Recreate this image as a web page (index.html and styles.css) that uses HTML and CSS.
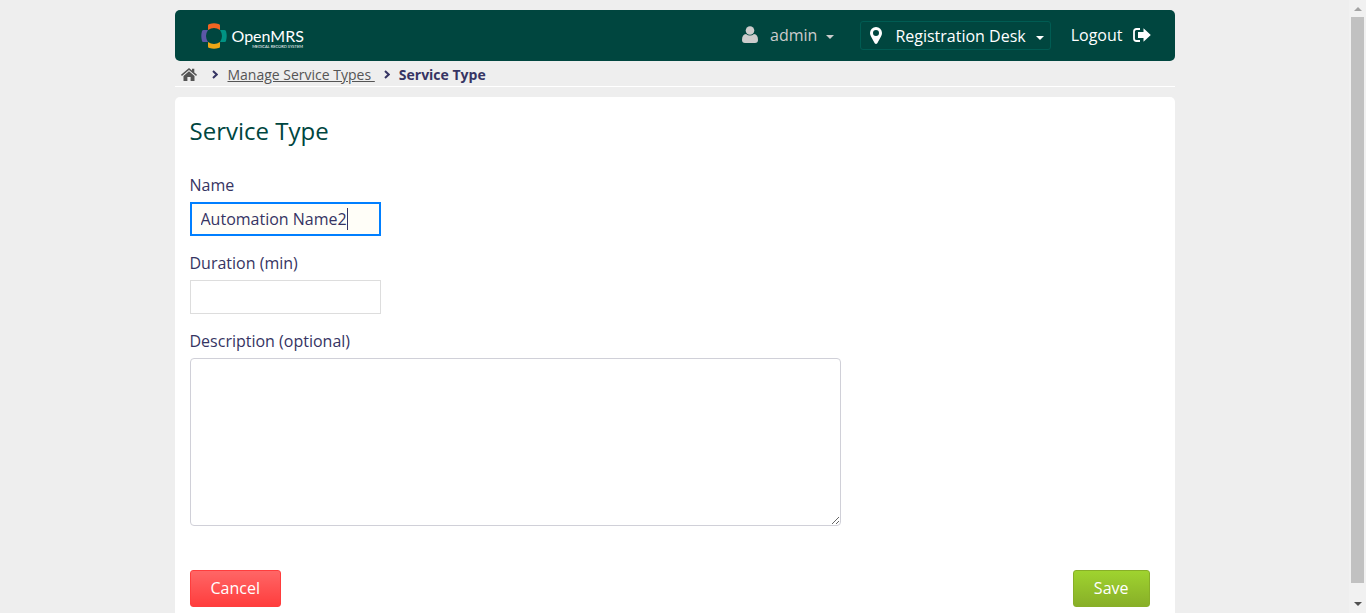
FILE: index.html
```html
<!DOCTYPE html>
<html lang="en">
<head>
<meta charset="utf-8">
<meta name="viewport" content="width=device-width, initial-scale=1">
<title>Service Type</title>
<link rel="stylesheet" href="styles.css">
</head>
<body>
<div class="page">
  <header class="topbar">
    <a class="brand" href="#">
      <svg class="brand-mark" viewBox="0 0 26 26" aria-hidden="true">
        <path fill="#f26522" d="M7 2.500Q7 1 8.500.9Q13-.3 17.500.9Q19 1 19 2.500V7Q13 3 7 7Z"/>
        <path fill="#009384" d="M23.500 7Q25 7 25.100 8.500Q26.300 13 25.100 17.500Q25 19 23.500 19H19Q23 13 19 7Z"/>
        <path fill="#eea616" d="M7 23.500Q7 25 8.500 25.100Q13 26.300 17.500 25.100Q19 25 19 23.500V19Q13 23 7 19Z"/>
        <path fill="#5b57a6" d="M2.500 7Q1 7 .9 8.500Q-.3 13 .9 17.500Q1 19 2.500 19H7Q3 13 7 7Z"/>
      </svg>
      <span class="brand-text">
        <span class="brand-name">OpenMRS</span>
        <span class="brand-tag">MEDICAL RECORD SYSTEM</span>
      </span>
    </a>
    <nav class="user-nav">
      <a class="nav-user" href="#">
        <svg class="icon-user" viewBox="0 0 16 17" aria-hidden="true"><circle cx="8" cy="4.500" r="4.300"/><path d="M4 8Q8 11 12 8Q16 8.500 16 14Q16 17 13 17H3Q0 17 0 14Q0 8.500 4 8Z"/></svg>
        <span>admin</span>
        <span class="caret"></span>
      </a>
      <button class="nav-location" type="button">
        <svg class="icon-pin" viewBox="0 0 12 17" aria-hidden="true"><path fill-rule="evenodd" d="M6 0A6 6 0 0 1 12 6Q12 7.500 11 9.500L7.300 16.200Q6 17.700 4.700 16.200L1 9.500Q0 7.500 0 6A6 6 0 0 1 6 0ZM6 3A3 3 0 0 0 6 9A3 3 0 0 0 6 3Z"/></svg>
        <span>Registration Desk</span>
        <span class="caret"></span>
      </button>
      <a class="nav-logout" href="#">
        <span>Logout</span>
        <svg class="icon-logout" viewBox="0 0 18 14" aria-hidden="true"><path d="M7 1H3.500Q1 1 1 3.500V10.500Q1 13 3.500 13H7" fill="none" stroke="currentColor" stroke-width="1.800"/><path d="M5 4H10.500V.3L17.800 7L10.500 13.700V10H5Z"/></svg>
      </a>
    </nav>
  </header>

  <nav class="breadcrumbs" aria-label="Breadcrumb">
    <a class="crumb-home" href="#" aria-label="Home">
      <svg class="icon-home" viewBox="0 0 16 13" aria-hidden="true"><path d="M8 0L11 2.500V.8H13.300V4.500L16 6.800L15.100 7.900L8 2L.9 7.900L0 6.800Z"/><path d="M8 3.300L13.500 7.900V13H9.600V9H6.400V13H2.500V7.900Z"/></svg>
    </a>
    <svg class="icon-chevron" viewBox="0 0 6 9" aria-hidden="true"><path d="M1 1L4.700 4.500L1 8"/></svg>
    <a class="crumb-link" href="#">Manage Service Types&nbsp;</a>
    <svg class="icon-chevron" viewBox="0 0 6 9" aria-hidden="true"><path d="M1 1L4.700 4.500L1 8"/></svg>
    <span class="crumb-current">Service Type</span>
  </nav>

  <main class="card">
    <h1 class="title">Service Type</h1>
    <form class="form">
      <div class="field">
        <label for="name">Name</label>
        <div class="input-wrap">
          <input class="input input-active" id="name" type="text" value="Automation Name2">
          <span class="text-cursor"></span>
        </div>
      </div>
      <div class="field">
        <label for="duration">Duration (min)</label>
        <input class="input" id="duration" type="text">
      </div>
      <div class="field">
        <label for="description">Description (optional)</label>
        <textarea class="textarea" id="description"></textarea>
      </div>
      <div class="actions">
        <button class="btn btn-cancel" type="button">Cancel</button>
        <button class="btn btn-save" type="button">Save</button>
      </div>
    </form>
  </main>
</div>
<div class="scrollbar" aria-hidden="true">
  <span class="scroll-up"></span>
  <span class="scroll-thumb"></span>
  <span class="scroll-down"></span>
</div>
</body>
</html>
```
FILE: styles.css
```css
* { box-sizing: border-box; }

body {
  margin: 0;
  min-height: 100vh;
  display: flex;
  background: #eee;
  color: #363463;
  font-family: "Open Sans", sans-serif;
  font-size: 16px;
  line-height: 22px;
}

button, input, textarea { font: inherit; color: inherit; }
a { color: inherit; text-decoration: none; }
svg { display: block; flex: none; fill: currentColor; }

.page {
  flex: 1;
  max-width: 1000px;
  margin: 0 auto;
  padding-top: 10px;
  display: flex;
  flex-direction: column;
}

.topbar {
  display: flex;
  align-items: center;
  justify-content: space-between;
  height: 51px;
  padding: 0 24px 0 26px;
  background: #00463f;
  border-radius: 5px;
  color: #fff;
}

.brand { display: flex; align-items: center; gap: 5px; }
.brand-mark { width: 26px; height: 26px; }
.brand-text { display: flex; flex-direction: column; align-items: flex-end; padding-top: 4px; }
.brand-name { font-family: Lato, sans-serif; font-size: 16px; line-height: 18px; }
.brand-tag { font-family: Lato, sans-serif; font-size: 4px; line-height: 4px; padding-right: 1px; }

.user-nav { display: flex; align-items: center; padding-bottom: 2px; }
.nav-user { display: flex; align-items: center; gap: 12px; margin-right: 26px; color: #ccc; }
.nav-user .caret, .nav-location .caret { margin: 5px 0 0 -3px; }
.icon-user { width: 16px; height: 17px; }
.caret { border: 4px solid transparent; border-top-color: currentColor; border-bottom: 0; }

.nav-location {
  display: flex;
  align-items: center;
  gap: 13px;
  height: 29px;
  margin: 2px 20px 0 0;
  padding: 0 6px 0 9px;
  background: none;
  border: 1px solid #005c53;
  border-radius: 3px;
  color: #fff;
}
.icon-pin { width: 12px; height: 17px; }

.nav-logout { display: flex; align-items: center; gap: 10px; }
.icon-logout { width: 18px; height: 14px; }

.breadcrumbs {
  display: flex;
  align-items: center;
  height: 26px;
  padding: 2px 6px 0;
  border-bottom: 1px solid #fff;
  font-size: 14px;
  line-height: 20px;
}
.crumb-home { color: #555; margin-right: 15px; }
.icon-home { width: 16px; height: 13px; }
.icon-chevron { width: 6px; height: 9px; fill: none; stroke: currentColor; stroke-width: 2; }
.crumb-link { margin: 0 9px 0 10px; color: #555; text-decoration: underline; }
.crumb-current { margin-left: 9px; font-weight: 700; }

.card {
  flex: 1;
  margin-top: 10px;
  padding: 19px 25px 6px 15px;
  background: #fff;
  border-radius: 5px 5px 0 0;
}

.title { margin: 0 0 28px; color: #00463f; font-size: 24px; line-height: 30px; font-weight: 400; }

.form, .field { display: flex; flex-direction: column; }
.form { gap: 16px; }
.field { align-items: flex-start; gap: 6px; }

.input-wrap { position: relative; }
.input {
  display: block;
  width: 191px;
  height: 34px;
  padding: 0 10px;
  background: #fff;
  border: 1px solid #ddd;
  outline: 0;
}
.input-active { padding: 0 9px; background: #fffef8; border: 2px solid #007fff; }
.text-cursor { position: absolute; left: 157px; top: 6px; width: 1px; height: 22px; background: #363463; }

.textarea {
  display: block;
  width: 651px;
  max-width: 100%;
  height: 168px;
  padding: 5px 10px;
  background: #fff;
  border: 1px solid #d0d0d8;
  border-radius: 4px;
}

.actions { display: flex; justify-content: space-between; padding-top: 28px; }
.btn { height: 37px; padding: 0 20px 2px; border: 1px solid; border-radius: 3px; color: #fff; }
.btn-cancel { background: linear-gradient(#ff6666, #ff3d3d); border-color: #ff3d3d; }
.btn-save { background: linear-gradient(#9fd32f, #88af28); border-color: #88af28; }

.scrollbar {
  width: 17px;
  padding: 7px 2px;
  display: flex;
  flex-direction: column;
  align-items: center;
  background: #f1f1f1;
}
.scroll-up { border: 4px solid transparent; border-bottom-color: #a3a3a3; border-top: 0; margin-bottom: 6px; }
.scroll-thumb { flex: 1; width: 100%; margin-bottom: 19px; background: #c1c1c1; }
.scroll-down { border: 4px solid transparent; border-top-color: #505050; border-bottom: 0; }
```
